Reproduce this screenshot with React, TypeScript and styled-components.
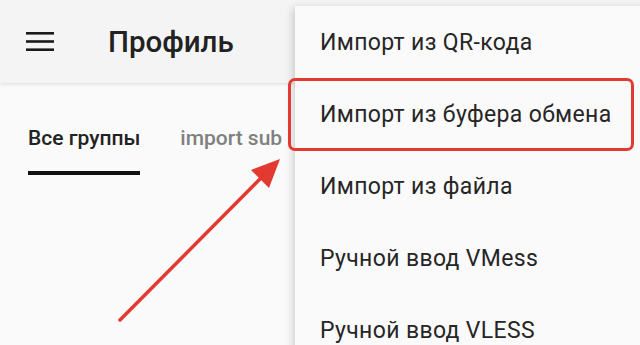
import React from "react";
import styled, { createGlobalStyle } from "styled-components";

const GlobalStyle = createGlobalStyle`
  html, body {
    margin: 0;
    padding: 0;
    background: #fafafa;
  }
  body {
    font-family: Roboto, "Noto Sans", Arial, sans-serif;
  }
`;

const Screen = styled.div`
  position: relative;
  width: 640px;
  height: 345px;
  overflow: hidden;
  background: #fafafa;
`;

const AppBar = styled.header`
  display: flex;
  align-items: center;
  height: 83px;
  padding-left: 26px;
  gap: 54px;
  background: #f4f4f4;
  box-shadow: 0 1px 4px rgba(0, 0, 0, 0.12);
`;

const Title = styled.h1`
  margin: 0;
  font-size: 29.5px;
  font-weight: 500;
  color: #222;
`;

const Tabs = styled.nav`
  display: flex;
  gap: 40px;
  padding: 43px 0 0 28px;
`;

const Tab = styled.div<{ $active?: boolean }>`
  display: flex;
  flex-direction: column;
  align-items: stretch;
  font-size: 21px;
  font-weight: 500;
  color: ${(p) => (p.$active ? "#222" : "#808080")};
  &::after {
    content: "";
    display: block;
    height: 3.5px;
    margin-top: 21px;
    background: ${(p) => (p.$active ? "#111" : "transparent")};
  }
`;

const Menu = styled.ul`
  position: absolute;
  top: 6px;
  left: 295px;
  width: 360px;
  margin: 0;
  padding: 0;
  list-style: none;
  background: #fafafa;
  box-shadow: -2px 2px 8px rgba(0, 0, 0, 0.18);
`;

const MenuItem = styled.li<{ $marked?: boolean }>`
  position: relative;
  display: flex;
  align-items: center;
  height: 72px;
  padding-left: 25px;
  font-size: 23px;
  letter-spacing: 0.35px;
  color: #262626;
  &::after {
    content: "";
    display: ${(p) => (p.$marked ? "block" : "none")};
    position: absolute;
    left: -7px;
    right: 21px;
    top: 0;
    bottom: -1px;
    border: 3px solid #e23a30;
    border-radius: 7px;
  }
`;

const Annotation = styled.svg`
  position: absolute;
  left: 0;
  top: 0;
`;

const Hamburger = () => (
  <svg width="28" height="20" viewBox="0 0 28 20">
    <rect x="0" y="0" width="28" height="2.6" fill="#1a1a1a" />
    <rect x="0" y="8.2" width="28" height="2.6" fill="#1a1a1a" />
    <rect x="0" y="16.4" width="28" height="2.6" fill="#1a1a1a" />
  </svg>
);

const items = [
  "Импорт из QR-кода",
  "Импорт из буфера обмена",
  "Импорт из файла",
  "Ручной ввод VMess",
  "Ручной ввод VLESS",
];

export default function App() {
  return (
    <Screen>
      <GlobalStyle />
      <AppBar>
        <Hamburger />
        <Title>Профиль</Title>
      </AppBar>
      <Tabs>
        <Tab $active>Все группы</Tab>
        <Tab>import sub</Tab>
      </Tabs>
      <Menu>
        {items.map((t, i) => (
          <MenuItem key={t} $marked={i === 1}>
            {t}
          </MenuItem>
        ))}
      </Menu>
      <Annotation width="640" height="345" viewBox="0 0 640 345">
        <line x1="120" y1="320" x2="266" y2="173" stroke="#e23a30" strokeWidth="3.5" strokeLinecap="round" />
        <polygon points="280,159 251,170 269,188" fill="#e23a30" />
      </Annotation>
    </Screen>
  );
}
